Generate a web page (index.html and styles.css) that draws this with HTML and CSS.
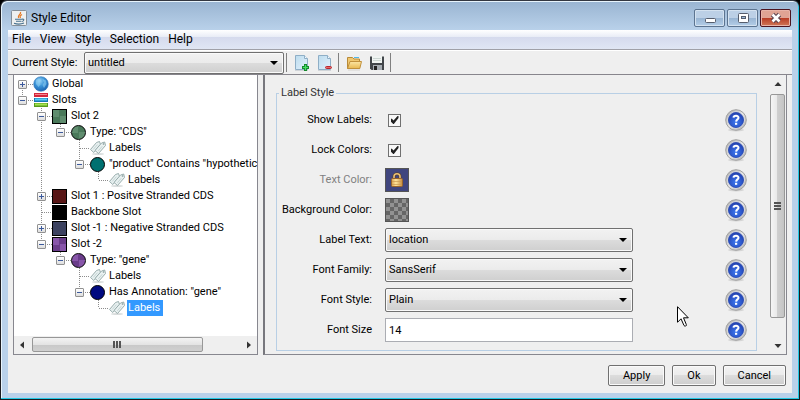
FILE: index.html
```html
<!DOCTYPE html>
<html lang="en">
<head>
<meta charset="utf-8">
<meta name="viewport" content="width=device-width, initial-scale=1">
<title>Style Editor</title>
<link rel="stylesheet" href="styles.css">
</head>
<body>
<svg class="defs" aria-hidden="true">
  <defs>
    <linearGradient id="g-ring" x1="0" y1="0" x2="1" y2="1"><stop offset="0" stop-color="#a4a4a4"/><stop offset=".5" stop-color="#e6e6e6"/><stop offset="1" stop-color="#a8a8a8"/></linearGradient>
    <radialGradient id="g-blue" cx=".5" cy=".65" r=".6"><stop offset="0" stop-color="#3c78f0"/><stop offset="1" stop-color="#2444b4"/></radialGradient>
    <radialGradient id="g-globe" cx=".4" cy=".3" r=".7"><stop offset="0" stop-color="#9ad4f6"/><stop offset=".5" stop-color="#3a94d8"/><stop offset="1" stop-color="#1c66b4"/></radialGradient>
    <linearGradient id="g-page" x1="0" y1="0" x2="1" y2="1"><stop offset="0" stop-color="#bcdcee"/><stop offset="1" stop-color="#e2f0fc"/></linearGradient>
    <linearGradient id="g-folder" x1="0" y1="0" x2="0" y2="1"><stop offset="0" stop-color="#fce6a4"/><stop offset="1" stop-color="#e8b850"/></linearGradient>
    <linearGradient id="g-lock" x1="0" y1="0" x2="1" y2="0"><stop offset="0" stop-color="#d8a04c"/><stop offset=".4" stop-color="#ffe49c"/><stop offset="1" stop-color="#c48a3c"/></linearGradient>
  </defs>
  <symbol id="help" viewBox="0 0 22 24">
    <ellipse cx="11" cy="22" rx="8" ry="1.500" fill="#d4d4d4"/>
    <circle cx="11" cy="12" r="10.300" fill="url(#g-ring)" stroke="#a2a2a2"/>
    <circle cx="11" cy="12" r="8.500" fill="#e4e4e8"/>
    <circle cx="11" cy="12" r="7.600" fill="url(#g-blue)" stroke="#2848ac" stroke-width=".8"/>
    <path d="M8.500 9.700C8.700 7.300 13.500 7.200 13.500 9.700C13.500 11.400 11.200 11.400 11.100 13.600" fill="none" stroke="#fff" stroke-width="2"/>
    <rect x="10" y="14.800" width="2.200" height="2" fill="#fff"/>
  </symbol>
  <symbol id="tags" viewBox="0 0 16 16">
    <ellipse cx="8" cy="14" rx="6" ry="1" fill="#d9dddd"/>
    <g fill="#e9f1f1" stroke="#8fa5a5" stroke-width=".9" stroke-linejoin="round">
      <path d="M.500 9.500 6.500 2.500 9.500 1.500 10.500 4.500 3.800 12.500Z"/>
      <path d="M5 10.500 11.500 3 14.700 2 15.500 5.500 8.500 13.500Z"/>
    </g>
    <circle cx="13.500" cy="4" r=".8" fill="#7d9494"/>
    <path d="M8.300 10.800 12.200 6.300M3.200 9.500 7.500 4.600" stroke="#b9cbcb" stroke-width=".8"/>
  </symbol>
  <symbol id="page" viewBox="0 0 16 16">
    <path d="M1.500.500H10.500L13.500 3.500V14.500H1.500Z" fill="url(#g-page)" stroke="#8eaec6"/>
    <path d="M10.500.500V3.500H13.500" fill="#f4faff" stroke="#8eaec6"/>
    <path d="M1 15.500H14" stroke="#d0d4d8"/>
  </symbol>
</svg>

<div class="window">
  <header class="titlebar">
    <svg class="app-icon" viewBox="0 0 16 16" aria-hidden="true">
      <rect x=".5" y=".5" width="15" height="15" rx="1" fill="#eef0f0" stroke="#858f98"/>
      <path d="M9.500 2C10.500 4.500 6 5 7.500 8M11 4.500C9 5.500 8.500 6.500 9.500 8" fill="none" stroke="#e67a24" stroke-width="1.300"/>
      <path d="M4 9.300H11M5 11.200H10.300M3 13.300C6 14.300 10 14.300 13 13M11 9.200C13.600 8.600 13.300 11.200 10.800 11.500" fill="none" stroke="#47718f" stroke-width="1.100"/>
    </svg>
    <h1>Style Editor</h1>
    <div class="window-buttons">
      <button type="button" aria-label="Minimize"><svg viewBox="0 0 12 12"><rect x="1.500" y="6.500" width="10" height="4" rx="1" fill="#fff" stroke="#555d6c"/></svg></button>
      <button type="button" aria-label="Maximize"><svg viewBox="0 0 12 12"><rect x="1.500" y="1.500" width="10" height="9" rx="1" fill="#fff" stroke="#555d6c"/><rect x="4.500" y="4.500" width="4" height="2" fill="#9ab8d8" stroke="#555d6c"/></svg></button>
      <button type="button" class="close" aria-label="Close"><svg viewBox="0 0 12 12"><path d="M2.500 2.500 9.500 9.500M9.500 2.500 2.500 9.500" stroke="#5a4450" stroke-width="4.600"/><path d="M2.500 2.500 9.500 9.500M9.500 2.500 2.500 9.500" stroke="#fff" stroke-width="2.600"/></svg></button>
    </div>
  </header>

  <div class="client">
    <nav class="menubar">
      <button type="button">File</button>
      <button type="button">View</button>
      <button type="button">Style</button>
      <button type="button">Selection</button>
      <button type="button">Help</button>
    </nav>

    <div class="toolbar">
      <label for="current-style">Current Style:</label>
      <span class="combo style-combo"><select id="current-style"><option>untitled</option></select><i class="arrow"></i></span>
      <div class="tool-group">
        <button type="button" aria-label="New style"><svg viewBox="0 0 16 16"><use href="#page"/><path d="M11.500 9V16M8 12.500H15" stroke="#168a2c" stroke-width="3"/><path d="M11.500 10V15M9 12.500H14" stroke="#48e068" stroke-width="1.200"/></svg></button>
        <button type="button" aria-label="Remove style"><svg viewBox="0 0 16 16"><use href="#page"/><rect x="8.500" y="11.500" width="6" height="2" rx="1" fill="#e86868" stroke="#b82830"/></svg></button>
      </div>
      <div class="tool-group">
        <button type="button" aria-label="Open"><svg viewBox="0 0 16 16"><path d="M1.500 13.500V2.500H6.500L8 4H13.500V13.500Z" fill="#f0c870" stroke="#b88a38"/><path d="M8 2.500H13" stroke="#50b8e8"/><path d="M4 6.500H15.500L13.800 13.500H1.500Z" fill="url(#g-folder)" stroke="#c0903c"/><path d="M2 15H14" stroke="#d6d4d0"/></svg></button>
        <button type="button" aria-label="Save"><svg viewBox="0 0 16 16"><path d="M1 1.500H15V15H2.500L1 13.500Z" fill="#42464a"/><rect x="3" y="1" width="10" height="7" fill="#f0f4f2"/><path d="M4 3.500H12M4 5.500H12" stroke="#ccd6d2"/><rect x="4" y="10" width="9" height="5" fill="#a8aeb4"/><rect x="5" y="11" width="3" height="4" fill="#222"/></svg></button>
      </div>
    </div>

    <main class="split">
      <section class="tree-pane" aria-label="Styles">
        <ul class="tree">
          <li><div class="row"><button type="button" class="toggle plus" aria-label="Expand"></button><i class="link"></i>
            <svg class="icon" viewBox="0 0 16 16"><circle cx="8" cy="8" r="7.300" fill="url(#g-globe)" stroke="#3474b4" stroke-width=".6"/><path d="M3 4 6 2.500 8 4 6.500 6 7.500 8.500 5.500 11 3 8ZM9.500 3 13 4.500 13.500 8 11 12 9.500 9 11 6.500Z" fill="#96d4f4" opacity=".55"/></svg><span>Global</span></div></li>
          <li><div class="row"><button type="button" class="toggle" aria-label="Collapse"></button><i class="link"></i>
            <svg class="icon" viewBox="0 0 16 16"><g><rect x="1" y="1" width="14" height="4" fill="#d4283c"/><path d="M2 2.500H14" stroke="#f48890"/><rect x="1" y="6" width="14" height="4" fill="#1878b8"/><path d="M2 7.500H14" stroke="#54ccf4" stroke-width="2"/><rect x="1" y="11" width="14" height="4" fill="#5a9c1c"/><path d="M2 12.500H14" stroke="#a4e450" stroke-width="2"/></g></svg><span>Slots</span></div>
            <ul>
              <li><div class="row"><button type="button" class="toggle" aria-label="Collapse"></button><i class="link"></i><i class="swatch green"></i><span>Slot 2</span></div>
                <ul>
                  <li><div class="row"><button type="button" class="toggle" aria-label="Collapse"></button><i class="link"></i><i class="swatch round green"></i><span>Type: "CDS"</span></div>
                    <ul>
                      <li><div class="row"><i class="link leaf"></i><svg class="icon"><use href="#tags"/></svg><span>Labels</span></div></li>
                      <li><div class="row"><button type="button" class="toggle" aria-label="Collapse"></button><i class="link"></i><i class="swatch round teal"></i><span>"product" Contains "hypothetic</span></div>
                        <ul>
                          <li><div class="row"><i class="link leaf"></i><svg class="icon"><use href="#tags"/></svg><span>Labels</span></div></li>
                        </ul>
                      </li>
                    </ul>
                  </li>
                </ul>
              </li>
              <li><div class="row"><button type="button" class="toggle plus" aria-label="Expand"></button><i class="link"></i><i class="swatch maroon"></i><span>Slot 1 : Positve Stranded CDS</span></div></li>
              <li><div class="row"><i class="link leaf"></i><i class="swatch black"></i><span>Backbone Slot</span></div></li>
              <li><div class="row"><button type="button" class="toggle plus" aria-label="Expand"></button><i class="link"></i><i class="swatch slate"></i><span>Slot -1 : Negative Stranded CDS</span></div></li>
              <li><div class="row"><button type="button" class="toggle" aria-label="Collapse"></button><i class="link"></i><i class="swatch purple"></i><span>Slot -2</span></div>
                <ul>
                  <li><div class="row"><button type="button" class="toggle" aria-label="Collapse"></button><i class="link"></i><i class="swatch round purple"></i><span>Type: "gene"</span></div>
                    <ul>
                      <li><div class="row"><i class="link leaf"></i><svg class="icon"><use href="#tags"/></svg><span>Labels</span></div></li>
                      <li><div class="row"><button type="button" class="toggle" aria-label="Collapse"></button><i class="link"></i><i class="swatch round navy"></i><span>Has Annotation: "gene"</span></div>
                        <ul>
                          <li><div class="row"><i class="link leaf"></i><svg class="icon"><use href="#tags"/></svg><span class="selected">Labels</span></div></li>
                        </ul>
                      </li>
                    </ul>
                  </li>
                </ul>
              </li>
            </ul>
          </li>
        </ul>
        <div class="scroll horizontal">
          <svg viewBox="0 0 16 16"><path d="M10 4.500V11.500L6 8Z" fill="#333"/></svg>
          <div class="track"><div class="thumb"><i class="grip"></i></div></div>
          <svg viewBox="0 0 16 16"><path d="M6 4.500V11.500L10 8Z" fill="#333"/></svg>
        </div>
      </section>

      <section class="detail-pane">
        <form class="detail">
          <fieldset>
            <legend>Label Style</legend>
            <div class="field"><label for="show">Show Labels:</label><div><input type="checkbox" id="show" checked></div><button type="button" class="help" aria-label="Help"><svg><use href="#help"/></svg></button></div>
            <div class="field"><label for="lock">Lock Colors:</label><div><input type="checkbox" id="lock" checked></div><button type="button" class="help" aria-label="Help"><svg><use href="#help"/></svg></button></div>
            <div class="field disabled"><label for="text-color">Text Color:</label><div><button type="button" id="text-color" class="color locked" disabled><svg viewBox="0 0 16 16"><path d="M5 8V4.500C5 .900 11 .900 11 4.500V8" fill="none" stroke="#5c4020" stroke-width="2.800"/><path d="M5 8V4.500C5 .900 11 .900 11 4.500V8" fill="none" stroke="#e8c078" stroke-width="1.600"/><rect x="2.500" y="6.500" width="11" height="8" rx="1" fill="url(#g-lock)" stroke="#99652c"/><path d="M3 9.500H13M3 12.500H13" stroke="#c89850" stroke-width=".7"/></svg></button></div><button type="button" class="help" aria-label="Help"><svg><use href="#help"/></svg></button></div>
            <div class="field"><label for="background-color">Background Color:</label><div><button type="button" id="background-color" class="color checker"></button></div><button type="button" class="help" aria-label="Help"><svg><use href="#help"/></svg></button></div>
            <div class="field"><label for="label-text">Label Text:</label><span class="combo"><select id="label-text"><option>location</option></select><i class="arrow"></i></span><button type="button" class="help" aria-label="Help"><svg><use href="#help"/></svg></button></div>
            <div class="field"><label for="family">Font Family:</label><span class="combo"><select id="family"><option>SansSerif</option></select><i class="arrow"></i></span><button type="button" class="help" aria-label="Help"><svg><use href="#help"/></svg></button></div>
            <div class="field"><label for="style">Font Style:</label><span class="combo"><select id="style"><option>Plain</option></select><i class="arrow"></i></span><button type="button" class="help" aria-label="Help"><svg><use href="#help"/></svg></button></div>
            <div class="field"><label for="size">Font Size</label><input type="text" id="size" value="14"><button type="button" class="help" aria-label="Help"><svg><use href="#help"/></svg></button></div>
          </fieldset>
        </form>
        <div class="scroll vertical">
          <svg viewBox="0 0 16 16"><path d="M4.500 10H11.500L8 6Z" fill="#333"/></svg>
          <div class="track"><div class="thumb"><i class="grip"></i></div></div>
          <svg viewBox="0 0 16 16"><path d="M4.500 6H11.500L8 10Z" fill="#333"/></svg>
        </div>
      </section>
    </main>

    <footer class="actions">
      <button type="button">Apply</button>
      <button type="button">Ok</button>
      <button type="button">Cancel</button>
    </footer>
  </div>
</div>
<svg class="pointer" viewBox="0 0 12 21" aria-hidden="true"><path d="M.500.700V16.300L4 12.800 7 19.500C8 20.800 9.800 20 9.300 18.500L6.500 11.800H11.300Z" fill="#fff" stroke="#000"/></svg>
</body>
</html>
```
FILE: styles.css
```css
* { box-sizing: border-box; }

body {
  margin: 0;
  background: #000;
  color: #000;
  font: 11px/16px Roboto, "Noto Sans", sans-serif;
}

button, select, input { font: inherit; color: inherit; margin: 0; }
button { padding: 0; border: 0; background: none; }
svg { display: block; }
i { display: block; }
.defs { position: absolute; width: 0; height: 0; }

.window {
  display: flex;
  flex-direction: column;
  height: 100vh;
  min-height: 400px;
  padding: 0 6px 6px;
  border: 1px solid #1c1c20;
  border-top-color: #333740;
  border-radius: 7px 7px 0 0;
  background: linear-gradient(#99b4d1, #b9d1ea 29px);
  box-shadow: inset -1px -1px #22c8e4, inset 1px 1px #e8f4fc;
}

.titlebar { display: flex; align-items: center; height: 29px; padding: 5px 2px 0 4px; }
.app-icon { width: 16px; height: 16px; }
.titlebar h1 { flex: 1; margin: 0 0 0 4px; font-size: 12px; font-weight: 400; line-height: 18px; }
.window-buttons { display: flex; gap: 2px; }
.window-buttons button {
  display: grid;
  place-items: center;
  width: 31px;
  height: 18px;
  border: 1px solid #5c7490;
  border-radius: 2px;
  background: linear-gradient(#bcd0e6 50%, #98b4d2 50%, #b4cee8);
  box-shadow: inset 0 0 0 1px #d4e2f0;
}
.window-buttons svg { width: 12px; height: 12px; }
.window-buttons .close {
  border-color: #4c1420;
  background: linear-gradient(#e0a494 50%, #b83c24 50%, #d07858);
  box-shadow: inset 0 0 0 1px #e8b4a8;
}

.client { flex: 1; display: flex; flex-direction: column; min-height: 0; margin: 0 1px; background: #efefef; }

.menubar {
  display: flex;
  gap: 9px;
  height: 20px;
  padding-left: 4px;
  border-bottom: 1px solid #a0a0a8;
  background: linear-gradient(#fff, #e8ecf6 7px, #d5daed 7px, #e0e6f4);
  font-size: 12px;
  line-height: 19px;
}

.toolbar {
  display: flex;
  align-items: center;
  height: 25px;
  padding-left: 4px;
  border-top: 1px solid #fff;
  border-bottom: 1px solid #87858c;
}
.toolbar label { width: 72px; white-space: nowrap; }
.style-combo { width: 200px; height: 22px; margin-right: 2px; }
.tool-group { display: flex; gap: 7px; padding-left: 7px; margin-right: 5px; border-left: 1px solid #808080; height: 19px; align-items: center; }
.tool-group:last-child { padding-right: 5px; border-right: 1px solid #808080; }
.tool-group svg { width: 16px; height: 16px; }

.combo { display: grid; align-items: center; }
.combo > * { grid-area: 1 / 1; }
.combo select {
  appearance: none;
  width: 100%;
  height: 100%;
  padding: 0 3px;
  border: 1px solid #707070;
  border-radius: 2px;
  background: linear-gradient(#f2f2f2, #ebebeb 50%, #dcdcdc 50%, #cfcfcf);
  box-shadow: inset 0 0 0 1px #fafafa;
}
.arrow {
  justify-self: end;
  margin-right: 6px;
  border: 4px solid transparent;
  border-top-color: #000;
  border-bottom: 0;
  pointer-events: none;
}

.split {
  flex: 1;
  display: grid;
  grid-template-columns: 245px minmax(0, 1fr);
  gap: 5px;
  min-height: 0;
  padding: 0 5px;
}
.tree-pane { display: flex; flex-direction: column; min-height: 0; border: 1px solid #87878f; border-top: 0; background: #fff; }

.tree { flex: 1; min-height: 0; padding: 1px 0 0 4px; overflow: hidden; }
ul { margin: 0; padding: 0; list-style: none; }
ul ul { padding-left: 19px; }
.tree li {
  background: repeating-linear-gradient(#8c8c8c 0 1px, transparent 1px 2px) 4px 0 / 1px 100% no-repeat;
}
.tree li:last-child { background-size: 1px 8px; }
.tree > li:first-child { background-position: 4px 8px; }
.row { display: flex; align-items: center; height: 16px; white-space: nowrap; }
.row span { margin-left: 2px; padding: 0 1px; }
.row .selected { padding-right: 3px; background: #3399ff; color: #fff; }
.toggle {
  flex: none;
  width: 9px;
  height: 9px;
  border: 1px solid #919191;
  border-radius: 1px;
  background: linear-gradient(#3c5a9c, #3c5a9c) center / 5px 1px no-repeat, linear-gradient(#fff, #ddd);
}
.toggle.plus {
  background: linear-gradient(#3c5a9c, #3c5a9c) center / 5px 1px no-repeat, linear-gradient(#3c5a9c, #3c5a9c) center / 1px 5px no-repeat, linear-gradient(#fff, #ddd);
}
.link { flex: none; width: 6px; height: 1px; background: repeating-linear-gradient(90deg, transparent 0 1px, #8c8c8c 1px 2px); }
.link.leaf { width: 11px; margin-left: 4px; }
.icon { flex: none; width: 16px; height: 16px; }
.swatch { flex: none; width: 15px; height: 15px; margin-right: 1px; border: 1px solid #000; }
.swatch.round { border-radius: 50%; }
.green { background: repeating-conic-gradient(#4a795a 0 25%, #608d6f 0 50%); }
.purple { background: repeating-conic-gradient(#6a3c8a 0 25%, #8856aa 0 50%); }
.teal { background: #007070; }
.maroon { background: #581616; }
.black { background: #000; }
.slate { background: #3c4260; }
.navy { background: #000a80; }

.scroll { display: flex; flex: none; background: #efefef; }
.scroll svg { flex: none; width: 16px; height: 16px; }
.scroll .track { flex: 1; }
.thumb { display: grid; place-items: center; border: 1px solid #979797; border-radius: 2px; }
.horizontal { height: 18px; padding-top: 1px; }
.horizontal .thumb { width: 81%; height: 15px; margin-left: 2px; background: linear-gradient(#f3f3f3, #e4e4e4 50%, #c8c8c8 50%, #d0d0d0); }
.horizontal .grip { width: 8px; height: 7px; background: repeating-linear-gradient(90deg, #555 0 2px, transparent 2px 3px); }
.vertical { flex-direction: column; width: 17px; padding: 1px 1px 0; }
.vertical .thumb { width: 15px; height: 91%; margin-top: 2px; background: linear-gradient(90deg, #f5f5f5, #e8e8e8 50%, #cfcfcf 50%, #c4c4c4); }
.vertical .grip { width: 7px; height: 8px; background: repeating-linear-gradient(#555 0 2px, transparent 2px 3px); }

.detail-pane { display: flex; min-height: 0; border: 1px solid #87878f; border-top: 0; border-left: 2px solid #77777d; }
.detail { flex: 1; padding: 10px 12px 0 11px; min-width: 0; }
fieldset { min-width: 0; margin: 0; padding: 4px 9px 5px 0; border: 1px solid #b8cfe5; }
legend { margin-left: 2px; padding: 0 2px; color: #333; }
.field {
  display: grid;
  grid-template-columns: 95px minmax(0, 248px) 1fr;
  column-gap: 13px;
  align-items: center;
  height: 30px;
}
.field label { text-align: right; white-space: nowrap; }
.field .help { justify-self: end; }
.field .combo { height: 24px; }
.disabled label { color: #808080; }
.help svg { width: 22px; height: 24px; }
.field input[type="text"] { width: 100%; height: 24px; padding: 0 3px; border: 1px solid #abadb3; background: #fff; }
.field input[type="checkbox"] {
  appearance: none;
  display: grid;
  place-items: center;
  width: 13px;
  height: 13px;
  margin-left: 3px;
  border: 1px solid #707070;
  background: #f8f8f8;
}
.field input[type="checkbox"]:checked::before {
  content: "";
  width: 8px;
  height: 8px;
  background: #222;
  clip-path: polygon(0 45%, 14% 32%, 38% 56%, 88% 0, 100% 0, 100% 25%, 42% 100%, 34% 100%, 0 65%);
}
.color { display: grid; place-items: center; width: 24px; height: 24px; border: 1px solid #555; }
.locked { background: #40467e; }
.locked svg { width: 16px; height: 16px; }
.checker { background: repeating-conic-gradient(#666 0 25%, #929292 0 50%) 0 0 / 8px 8px; }

.actions { display: flex; flex: none; justify-content: flex-end; gap: 7px; height: 38px; padding: 10px 6px 0; }
.actions button {
  height: 21px;
  padding: 0 14px;
  border: 1px solid #707070;
  border-radius: 2px;
  background: linear-gradient(#f3f3f3, #ebebeb 50%, #dcdcdc 50%, #cecece);
  box-shadow: inset 0 0 0 1px #fafafa;
}

.pointer { position: absolute; left: 677px; top: 306px; width: 12px; height: 21px; pointer-events: none; }
```
